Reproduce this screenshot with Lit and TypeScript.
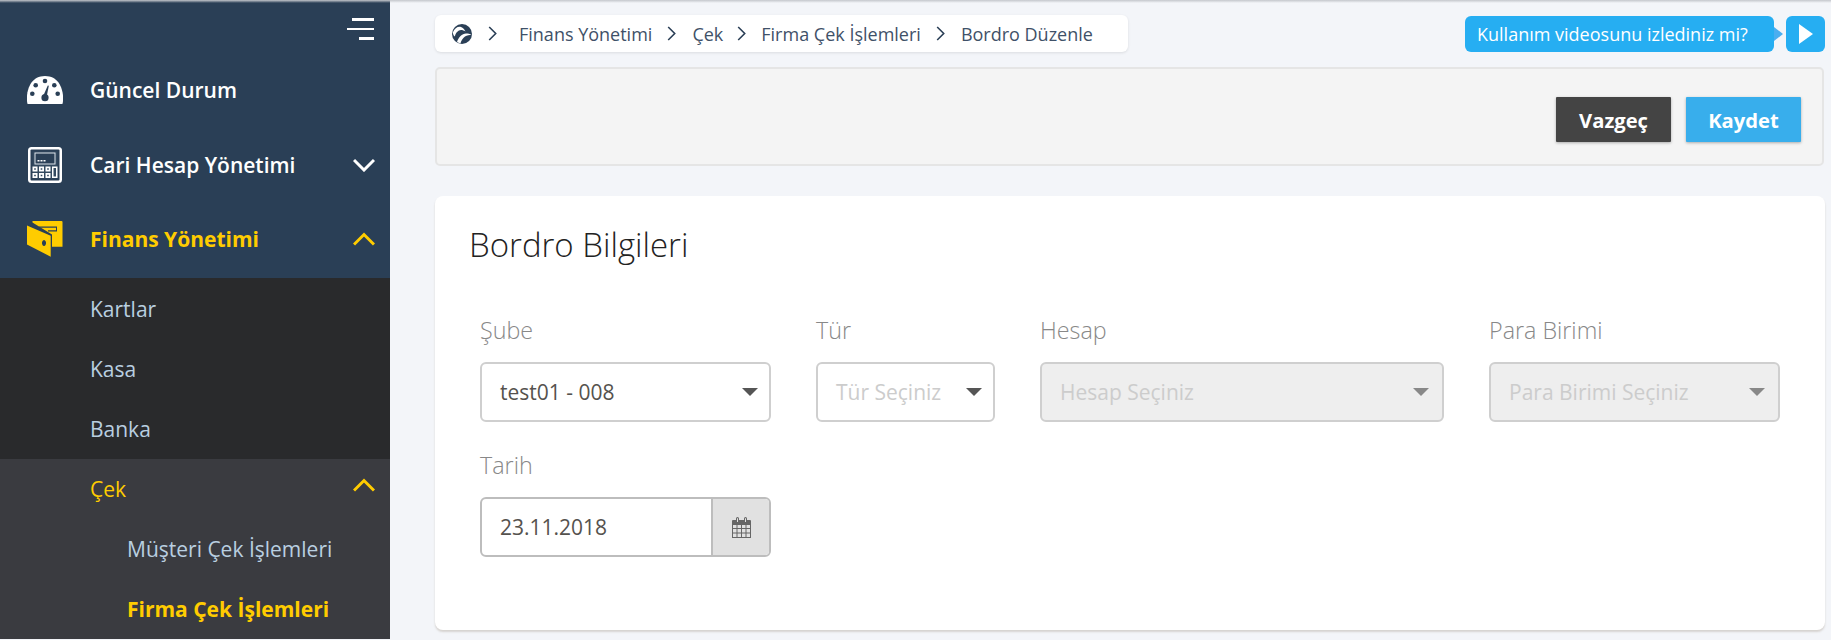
import { LitElement, html, css } from "lit";
import { customElement } from "lit/decorators.js";

const chevron = (up: boolean) => html`<svg class="chev ${up ? "up" : ""}" width="22" height="14" viewBox="0 0 22 14"><path d="${up ? "M1 12.500L11 2.500L21 12.500" : "M1 2L11 12L21 2"}" fill="none" stroke="currentColor" stroke-width="3"/></svg>`;

const gauge = html`<svg width="36" height="28" viewBox="0 0 36 28"><path fill="#fff" d="M.6 28C-1.500 22 0 0 18 0S37.500 22 35.400 28Z"/><g fill="#2a3f56"><circle cx="18" cy="5" r="2.300"/><circle cx="8.700" cy="9.300" r="2.300"/><circle cx="27.300" cy="9.300" r="2.300"/><circle cx="5.300" cy="17.700" r="2.300"/><circle cx="30.700" cy="17.700" r="2.300"/><circle cx="18" cy="21.700" r="3.600"/><path d="M16.600 19L20.800 9.500L21.800 9.800L19.800 20Z"/></g></svg>`;

const calc = html`<svg width="34" height="36" viewBox="0 0 34 36"><rect x="0" y="0" width="34" height="36" rx="3.500" fill="#fff"/><rect x="2.500" y="2.500" width="29" height="31" rx="1" fill="#2a3f56"/><rect x="4.500" y="4.500" width="25" height="27" fill="#33495f"/><rect x="6.500" y="5.500" width="21" height="12" fill="#dfe6ec"/><rect x="7.500" y="6.500" width="19" height="10" fill="#2a3f56"/><g fill="#fff"><rect x="9.500" y="13" width="2" height="1.500"/><rect x="12.500" y="13" width="2" height="1.500"/><rect x="15.500" y="13" width="2" height="1.500"/><path fill-rule="evenodd" d="M4.500 19.500h5v5h-5ZM6.200 21.200v1.600h1.600v-1.600ZM11 19.500h5v5h-5ZM12.700 21.200v1.600h1.600v-1.600ZM17.500 19.500h5v5h-5ZM19.200 21.200v1.600h1.600v-1.600ZM4.500 26h5v5h-5ZM6.200 27.700v1.600h1.600v-1.600ZM11 26h5v5h-5ZM12.700 27.700v1.600h1.600v-1.600ZM17.500 26h5v5h-5ZM19.200 27.700v1.600h1.600v-1.600ZM24 19.500h5.500v11.500h-5.500ZM25.500 21v8.500h2.500v-8.500Z"/></g></svg>`;

const wallet = html`<svg width="36" height="36" viewBox="0 0 36 36"><path fill="#ffcc00" d="M5.500 0H34.500a1 1 0 0 1 1 1V25.700H25V13.500L5.500 1.500Z"/><path d="M12 5.500H30V10.500H29V6.700H12ZM21 9.300H29V10.500H21Z" fill="#2a3f56"/><path fill-rule="evenodd" fill="#ffcc00" d="M0 4.500L23.700 14.700V35.700L0 23.500ZM17 19a2 3 0 1 0 .01 0Z"/></svg>`;

const logo = html`<svg width="20" height="20" viewBox="0 0 20 20"><circle cx="10" cy="10" r="10" fill="#2a3f56"/><path d="M.8 8.500C2.500 4 6 2.200 9 3C11 3.500 12.500 5.500 13.500 7.500C11 6 8.500 5.500 6.500 6.800C5 7.800 3.500 9.500 2.800 12.500C1.500 11.500 1 10 .8 8.500Z" fill="#fff"/><path d="M5 18C6.500 13.500 10 9.500 14 9.500C16 9.500 18 10 19.600 10.800C17.500 11 15 11.200 13 12.500C11 13.800 9.500 16 8.500 19.300C7 19 6 18.600 5 18Z" fill="#fff"/></svg>`;

const crumbSep = (cls = "") => html`<svg class="sep ${cls}" width="9" height="15" viewBox="0 0 9 15"><path d="M1.200 1L7.700 7.500L1.200 14" fill="none" stroke="#2a3f56" stroke-width="1.600"/></svg>`;

const calendar = html`<svg width="19" height="21" viewBox="0 0 19 21"><path fill="#666" fill-rule="evenodd" d="M1 3H4V1.500a1.500 1.500 0 0 1 3 0V3H12V1.500a1.500 1.500 0 0 1 3 0V3H18a1 1 0 0 1 1 1V21H0V4a1 1 0 0 1 1-1ZM5 1.200V5H6V1.200ZM13 1.200V5H14V1.200ZM1 8V11H4.500V8ZM5.500 8V11H9V8ZM10 8V11H13.500V8ZM14.500 8V11H18V8ZM1 12V15.500H4.500V12ZM5.500 12V15.500H9V12ZM10 12V15.500H13.500V12ZM14.500 12V15.500H18V12ZM1 16.500V20H4.500V16.500ZM5.500 16.500V20H9V16.500ZM10 16.500V20H13.500V16.500ZM14.500 16.500V20H18V16.500Z"/></svg>`;

@customElement("app-root")
export class AppRoot extends LitElement {
  static styles = css`
    :host { display: block; width: 1831px; height: 640px; overflow: hidden; font-family: "Open Sans", sans-serif; background: #f3f5f9; }
    .app { display: flex; height: 640px; position: relative; }
    .topshadow { position: absolute; left: 0; right: 0; top: 0; height: 3px; background: linear-gradient(#c4c7cc, rgba(200,203,208,0)); z-index: 2; pointer-events: none; }
    .side { width: 390px; flex: none; background: #2a3f56; display: flex; flex-direction: column; height: 639px; }
    .toggle { height: 52px; flex: none; display: flex; flex-direction: column; align-items: flex-end; padding: 18px 16px 0 0; box-sizing: border-box; gap: 7px; }
    .toggle i { display: block; height: 2.500px; background: #fff; }
    .l1 { width: 22px; } .l2 { width: 27px; } .l3 { width: 15px; }
    .nav { height: 75px; flex: none; display: flex; align-items: center; color: #fff; font-size: 21px; font-weight: 600; }
    .nav .ic { width: 90px; display: flex; padding-left: 27px; box-sizing: border-box; flex: none; }
    .nav.calc .ic { padding-left: 28px; }
    .nav.active { color: #ffcc00; font-weight: 700; height: 76px; padding-bottom: 2px; box-sizing: border-box; }
    .nav .chev, .sub .chev { margin-left: auto; margin-right: 15px; }
    .drop { background: #292a2c; height: 181px; flex: none; box-sizing: border-box; padding-top: 1px; }
    .sub { height: 60px; display: flex; align-items: center; padding-left: 90px; font-size: 21px; color: #b9cfe0; }
    .open { background: #3a3b40; flex: 1; }
    .sub.y { color: #ffcc00; }
    .sub.y .chev { position: relative; top: -4px; }
    .sub.d { padding-left: 127px; }
    .sub.b { color: #ffcc00; font-weight: 700; }
    .main { flex: 1; padding: 15px 6px 0 45px; display: flex; flex-direction: column; min-width: 0; }
    .top { display: flex; justify-content: space-between; height: 37px; }
    .crumb { width: 693px; height: 37px; background: #fff; border-radius: 6px; box-shadow: 0 1px 3px rgba(0,0,0,.1); display: flex; align-items: center; padding-left: 17px; box-sizing: border-box; font-size: 18px; color: #3f5168; white-space: nowrap; }
    .crumb .sep { margin: 0 15px 0 14px; flex: none; }
    .crumb .sep.wide { margin: 0 16px 0 15px; }
    .crumb .sep.first { margin: 0 22px 0 16px; }
    .help { display: flex; align-items: center; }
    .tip { position: relative; background: #26aef2; color: #fff; border-radius: 6px; height: 36px; width: 309px; display: flex; align-items: center; padding-left: 12px; box-sizing: border-box; font-size: 18px; margin-right: 12px; }
    .tip::after { content: ""; position: absolute; right: -9px; top: 11px; border-left: 9px solid #4aaef0; border-top: 7px solid transparent; border-bottom: 7px solid transparent; }
    .play { width: 39px; height: 36px; background: #26aef2; border-radius: 6px; display: flex; align-items: center; justify-content: center; }
    .panel { margin-top: 15px; height: 99px; width: 1389px; background: #f4f4f4; border: 2px solid #e5e5e5; border-radius: 5px; box-sizing: border-box; display: flex; justify-content: flex-end; align-items: flex-start; gap: 15px; padding: 28px 21px 0 0; }
    .btn { width: 115px; height: 45px; display: flex; align-items: center; justify-content: center; color: #fff; font-size: 20.200px; font-weight: 700; box-shadow: 0 1px 3px rgba(0,0,0,.3); border-radius: 1px; }
    .cancel { background: #444; } .save { background: #38aeec; }
    .card { margin-top: 30px; height: 434px; background: #fff; border-radius: 8px; box-shadow: 0 2px 2px rgba(180,170,160,.45); padding: 0 0 0 34px; }
    h2 { margin: 0; font-weight: 300; font-size: 33px; color: #222; height: 98px; line-height: 98px; }
    .row { display: flex; padding: 19px 0 0 11px; }
    .row.second { padding-top: 26px; }
    .col { display: flex; flex-direction: column; }
    .c1 { width: 291px; margin-right: 45px; }
    .c2 { width: 179px; margin-right: 45px; }
    .c3 { width: 404px; margin-right: 45px; }
    .c4 { width: 291px; }
    .lab { font-size: 23.300px; font-weight: 300; color: #888; height: 34px; line-height: 34px; margin-bottom: 15px; }
    .sel { height: 60px; border: 2px solid #cfcfcf; border-radius: 6px; box-sizing: border-box; display: flex; align-items: center; padding: 0 11px 0 18px; font-size: 21px; color: #55524e; justify-content: space-between; white-space: nowrap; background: #fff; }
    .sel.ph { color: #ccc; }
    .sel.dis { background: #eee; color: #ccc; border-color: #cfcfcf; padding-right: 13px; }
    .tri { width: 0; height: 0; border-left: 8px solid transparent; border-right: 8px solid transparent; border-top: 8px solid #555; flex: none; }
    .dis .tri { border-top-color: #888; border-left-width: 8px; border-right-width: 8px; }
    .date { display: flex; height: 60px; border: 2px solid #bdbdbd; border-radius: 6px; box-sizing: border-box; width: 291px; overflow: hidden; }
    .date .v { flex: 1; display: flex; align-items: center; padding-left: 18px; font-size: 21px; color: #55524e; }
    .date .a { width: 58px; background: #e1e1e1; border-left: 2px solid #bdbdbd; display: flex; align-items: center; justify-content: center; box-sizing: border-box; }
  `;

  render() {
    return html`<div class="app">
      <div class="topshadow"></div>
      <aside class="side">
        <div class="toggle"><i class="l1"></i><i class="l2"></i><i class="l3"></i></div>
        <div class="nav"><span class="ic">${gauge}</span>Güncel Durum</div>
        <div class="nav calc"><span class="ic">${calc}</span>Cari Hesap Yönetimi${chevron(false)}</div>
        <div class="nav active"><span class="ic">${wallet}</span>Finans Yönetimi${chevron(true)}</div>
        <div class="drop">
          <div class="sub">Kartlar</div>
          <div class="sub">Kasa</div>
          <div class="sub">Banka</div>
        </div>
        <div class="open">
          <div class="sub y">Çek${chevron(true)}</div>
          <div class="sub d">Müşteri Çek İşlemleri</div>
          <div class="sub d b">Firma Çek İşlemleri</div>
        </div>
      </aside>
      <main class="main">
        <div class="top">
          <div class="crumb">${logo}${crumbSep("first")}<span>Finans Yönetimi</span>${crumbSep("wide")}<span>Çek</span>${crumbSep()}<span>Firma Çek İşlemleri</span>${crumbSep("wide")}<span>Bordro Düzenle</span></div>
          <div class="help">
            <div class="tip">Kullanım videosunu izlediniz mi?</div>
            <div class="play"><svg width="14" height="20" viewBox="0 0 14 20"><path d="M0 0L14 10L0 20Z" fill="#fff"/></svg></div>
          </div>
        </div>
        <div class="panel"><div class="btn cancel">Vazgeç</div><div class="btn save">Kaydet</div></div>
        <section class="card">
          <h2>Bordro Bilgileri</h2>
          <div class="row">
            <div class="col c1"><div class="lab">Şube</div><div class="sel">test01 - 008<i class="tri"></i></div></div>
            <div class="col c2"><div class="lab">Tür</div><div class="sel ph">Tür Seçiniz<i class="tri"></i></div></div>
            <div class="col c3"><div class="lab">Hesap</div><div class="sel dis">Hesap Seçiniz<i class="tri"></i></div></div>
            <div class="col c4"><div class="lab">Para Birimi</div><div class="sel dis">Para Birimi Seçiniz<i class="tri"></i></div></div>
          </div>
          <div class="row second">
            <div class="col"><div class="lab">Tarih</div><div class="date"><div class="v">23.11.2018</div><div class="a">${calendar}</div></div></div>
          </div>
        </section>
      </main>
    </div>`;
  }
}
